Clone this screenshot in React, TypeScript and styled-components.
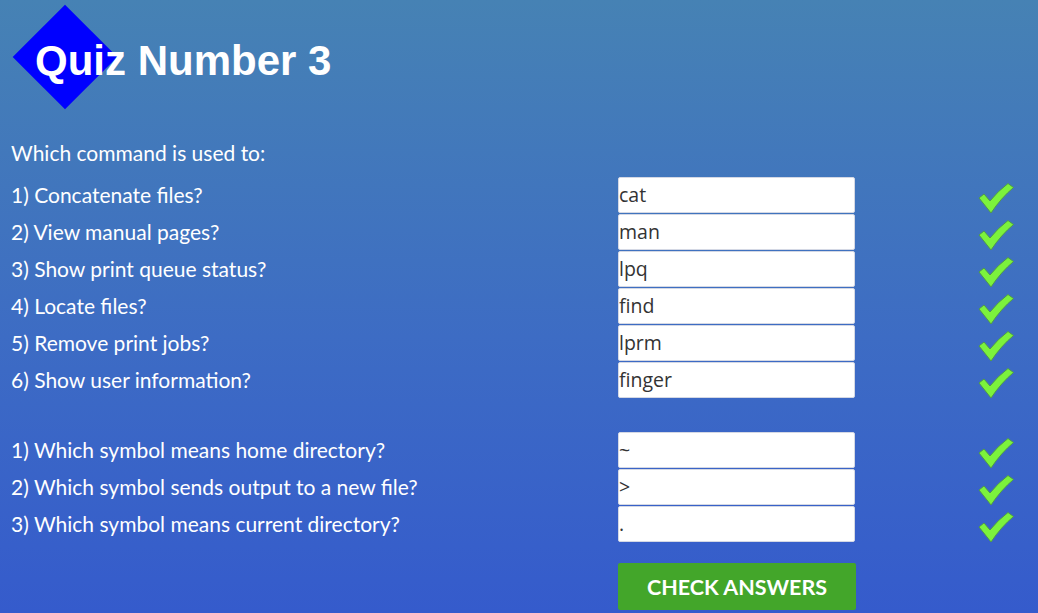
import React from "react";
import styled, { createGlobalStyle } from "styled-components";

const Global = createGlobalStyle`
  html, body { margin: 0; padding: 0; }
  body {
    width: 1038px;
    height: 613px;
    overflow: hidden;
    background: linear-gradient(180deg, #4682b4 0%, #3d6cc4 55%, #355bcc 100%);
    font-family: Lato, "Open Sans", sans-serif;
    color: #fff;
  }
`;

const Page = styled.div`
  width: 1038px;
  height: 613px;
  box-sizing: border-box;
  padding: 0 0 0 11px;
`;

const Header = styled.header`
  position: relative;
  height: 133px;
  display: flex;
  align-items: flex-start;
`;

const Diamond = styled.div`
  position: absolute;
  left: 17px;
  top: 20px;
  width: 74px;
  height: 74px;
  background: #0000ff;
  transform: rotate(45deg);
`;

const Title = styled.h1`
  position: relative;
  margin: 37px 0 0 24px;
  font-family: "Liberation Sans", Arial, sans-serif;
  font-weight: bold;
  font-size: 42px;
  line-height: 48px;
  color: #fff;
`;

const Intro = styled.p`
  margin: 7px 0 0;
  font-size: 21px;
  line-height: 26px;
`;

const Grid = styled.div<{ $top: number }>`
  display: grid;
  grid-template-columns: 607px 237px 123px 40px;
  grid-auto-rows: 37px;
  align-items: center;
  margin-top: ${(p) => p.$top}px;
`;

const Label = styled.span`
  font-size: 21px;
  line-height: 26px;
  white-space: nowrap;
`;

const Input = styled.input`
  box-sizing: border-box;
  width: 237px;
  height: 36px;
  margin: 0;
  padding: 0;
  border: 1px solid #d4d8e4;
  border-radius: 2px;
  background: #fff;
  font-family: "Open Sans", sans-serif;
  font-size: 19.5px;
  color: #333;
  outline: none;
`;

const CheckCell = styled.span`
  grid-column: 4;
  display: flex;
  align-items: center;
  height: 37px;
  padding-top: 7px;
  box-sizing: border-box;
`;

const ButtonRow = styled.div`
  display: grid;
  grid-template-columns: 607px 238px;
  margin-top: 21px;
`;

const Button = styled.button`
  grid-column: 2;
  height: 47px;
  border: none;
  border-radius: 2px;
  background: #43a62a;
  color: #fff;
  font-family: Lato, sans-serif;
  font-weight: bold;
  font-size: 21.5px;
  cursor: pointer;
`;

const Check = () => (
  <svg width="36" height="31" viewBox="0 0 36 31">
    <path
      d="M1 15 L6 11 L12 18 Q20 8 30 0.5 L35.5 4.5 Q23 15 13 30 Z"
      fill="#7cf23c"
      stroke="#4f9a4a"
      strokeWidth="1"
      strokeLinejoin="round"
    />
  </svg>
);

type Q = { q: string; a: string };

const commands: Q[] = [
  { q: "1) Concatenate files?", a: "cat" },
  { q: "2) View manual pages?", a: "man" },
  { q: "3) Show print queue status?", a: "lpq" },
  { q: "4) Locate files?", a: "find" },
  { q: "5) Remove print jobs?", a: "lprm" },
  { q: "6) Show user information?", a: "finger" },
];

const symbols: Q[] = [
  { q: "1) Which symbol means home directory?", a: "~" },
  { q: "2) Which symbol sends output to a new file?", a: ">" },
  { q: "3) Which symbol means current directory?", a: "." },
];

const Rows = ({ items }: { items: Q[] }) => (
  <>
    {items.map((it) => (
      <React.Fragment key={it.q}>
        <Label>{it.q}</Label>
        <Input defaultValue={it.a} />
        <CheckCell>
          <Check />
        </CheckCell>
      </React.Fragment>
    ))}
  </>
);

export default function App() {
  return (
    <>
      <Global />
      <Page>
        <Header>
          <Diamond />
          <Title>Quiz Number 3</Title>
        </Header>
        <Intro>Which command is used to:</Intro>
        <Grid $top={10}>
          <Rows items={commands} />
        </Grid>
        <Grid $top={33}>
          <Rows items={symbols} />
        </Grid>
        <ButtonRow>
          <Button>CHECK ANSWERS</Button>
        </ButtonRow>
      </Page>
    </>
  );
}
